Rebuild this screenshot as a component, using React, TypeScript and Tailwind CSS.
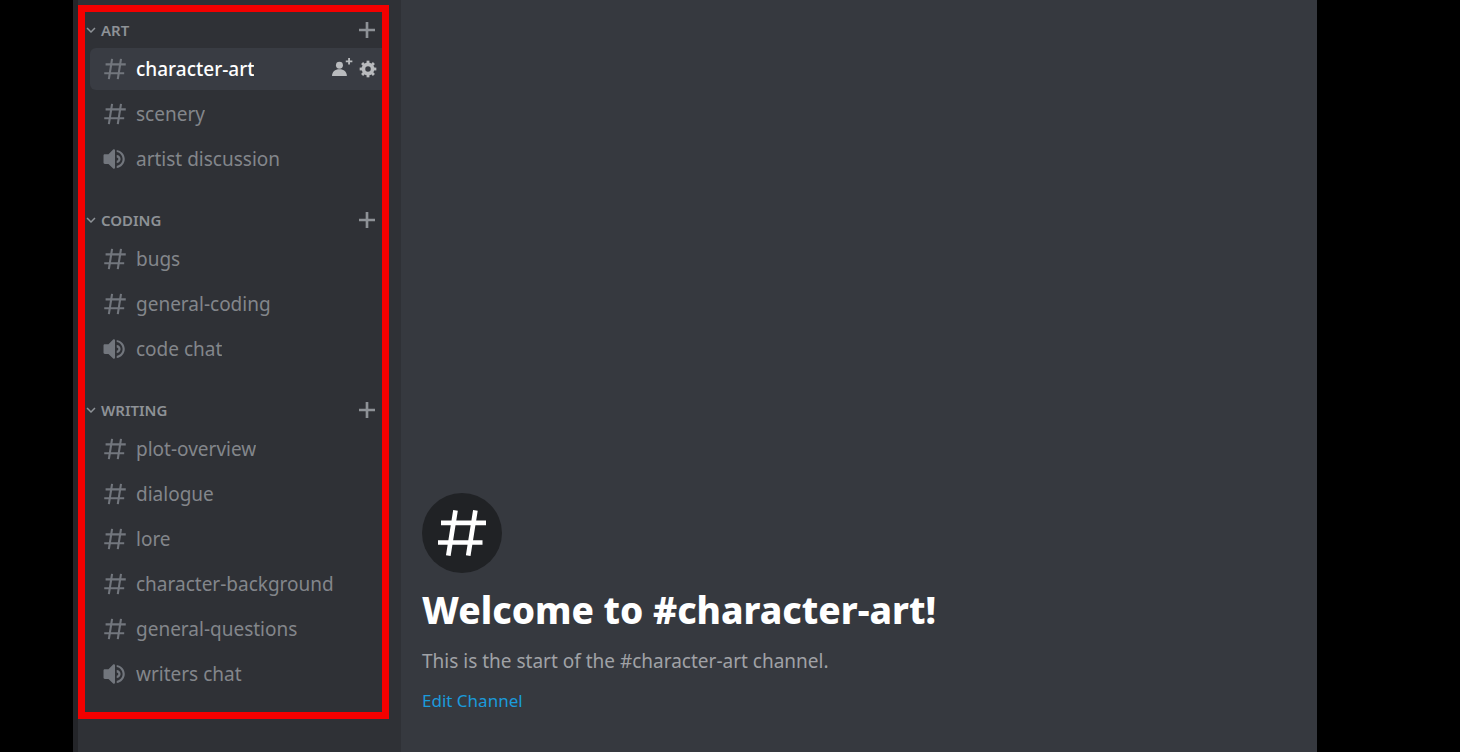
import React, { useState } from 'react';

type ChannelType = 'text' | 'voice';

interface Channel {
  name: string;
  type: ChannelType;
}

interface Category {
  name: string;
  channels: Channel[];
}

const CATEGORIES: Category[] = [
  {
    name: 'Art',
    channels: [
      { name: 'character-art', type: 'text' },
      { name: 'scenery', type: 'text' },
      { name: 'artist discussion', type: 'voice' }
    ]
  },
  {
    name: 'Coding',
    channels: [
      { name: 'bugs', type: 'text' },
      { name: 'general-coding', type: 'text' },
      { name: 'code chat', type: 'voice' }
    ]
  },
  {
    name: 'Writing',
    channels: [
      { name: 'plot-overview', type: 'text' },
      { name: 'dialogue', type: 'text' },
      { name: 'lore', type: 'text' },
      { name: 'character-background', type: 'text' },
      { name: 'general-questions', type: 'text' },
      { name: 'writers chat', type: 'voice' }
    ]
  }
];

const GEAR_TEETH = [0, 45, 90, 135, 180, 225, 270, 315];

function HashIcon({ className }: { className?: string }) {
  return (
    <svg
      viewBox="-5 -6 58 58"
      fill="none"
      stroke="currentColor"
      strokeWidth="4.7"
      className={className}
      aria-hidden="true"
    >
      <path d="M17.5 0.3L10.3 45.7M37.4 0.3L30.2 45.7M3 12.8H48M0 32.5H44.5" />
    </svg>
  );
}

function SpeakerIcon({ className }: { className?: string }) {
  return (
    <svg viewBox="0 0 24 24" fill="currentColor" className={className} aria-hidden="true">
      <path d="M11.383 3.079C11.009 2.925 10.579 3.01 10.293 3.296L6 7.5H2.6C1.9 7.5 1.4 8 1.4 8.6V15.4C1.4 16 1.9 16.5 2.6 16.5H6L10.293 20.71C10.579 20.996 11.009 21.082 11.383 20.927C11.757 20.772 12 20.407 12 20.002V4.002C12 3.599 11.757 3.232 11.383 3.079Z" />
      <path d="M13.6 3.6c4.2.6 7.4 4.1 7.4 8.4s-3.2 7.8-7.4 8.4v-2c3.1-.6 5.4-3.2 5.4-6.4s-2.3-5.8-5.4-6.4z" />
      <path d="M13.6 8.3c2 0 3.6 1.7 3.6 3.7s-1.6 3.7-3.6 3.7v-2.2c.8 0 1.5-.7 1.5-1.5s-.7-1.5-1.5-1.5z" />
    </svg>
  );
}

function InviteIcon({ className }: { className?: string }) {
  return (
    <svg viewBox="0 0 24 24" fill="currentColor" className={className} aria-hidden="true">
      <path d="M19.8 0H21.8V2.6H24.4V4.6H21.8V7.2H19.8V4.6H17.2V2.6H19.8V0Z" />
      <circle cx="10.3" cy="7.8" r="3.8" />
      <path d="M2.2 19.6C2.2 15 5.4 12.2 10.3 12.2C15.2 12.2 18.4 15 18.4 19.6Z" />
    </svg>
  );
}

function GearIcon({ className }: { className?: string }) {
  return (
    <svg
      viewBox="0 0 24 24"
      fill="none"
      stroke="currentColor"
      className={className}
      aria-hidden="true"
    >
      <circle cx="12" cy="12" r="5.5" strokeWidth="4.4" />
      {GEAR_TEETH.map((angle) => (
        <path key={angle} d="M12 5.5V2" strokeWidth="3.4" transform={`rotate(${angle} 12 12)`} />
      ))}
    </svg>
  );
}

function PlusIcon({ className }: { className?: string }) {
  return (
    <svg viewBox="0 0 18 18" fill="currentColor" className={className} aria-hidden="true">
      <polygon points="15 10 10 10 10 15 8 15 8 10 3 10 3 8 8 8 8 3 10 3 10 8 15 8" />
    </svg>
  );
}

function ChevronIcon({ className }: { className?: string }) {
  return (
    <svg viewBox="4 4 16 16" fill="currentColor" className={className} aria-hidden="true">
      <path d="M16.59 8.59L12 13.17L7.41 8.59L6 10L12 16L18 10L16.59 8.59Z" />
    </svg>
  );
}

interface ChannelRowProps {
  channel: Channel;
  selected: boolean;
  onSelect: () => void;
}

function ChannelRow({ channel, selected, onSelect }: ChannelRowProps) {
  const Icon = channel.type === 'voice' ? SpeakerIcon : HashIcon;

  return (
    <li
      className={`ml-[5px] flex h-[42px] items-center rounded-l-md pr-1 ${
        selected ? 'bg-[#393c43]' : 'hover:bg-[#34373c]'
      }`}
    >
      <button
        onClick={onSelect}
        className="flex h-full min-w-0 flex-1 cursor-pointer items-center gap-2 pl-3 text-left"
      >
        <Icon className="size-[26px] shrink-0 text-[#72767d]" />
        <span
          className={`truncate text-[19px] leading-7 ${
            selected ? 'font-medium text-white' : 'text-[#83868b]'
          }`}
        >
          {channel.name}
        </span>
      </button>
      {selected && (
        <div className="flex items-center gap-1.5 text-[#b9bbbe]">
          <button aria-label="Create invite" className="cursor-pointer">
            <InviteIcon className="size-[22px] overflow-visible" />
          </button>
          <button aria-label="Channel settings" className="cursor-pointer">
            <GearIcon className="size-5" />
          </button>
        </div>
      )}
    </li>
  );
}

export default function App() {
  const [selected, setSelected] = useState('character-art');

  return (
    <div className="flex min-h-screen bg-black pl-[73px] pr-[143px] font-['Noto_Sans',sans-serif]">
      <aside className="w-[328px] shrink-0 border-l-[5px] border-[#242529] bg-[#2f3136] pt-[5px]">
        {/* Highlighted channel list */}
        <nav aria-label="Channels" className="w-[311px] border-[7px] border-[#f40000] pb-[17px]">
          <div className="flex flex-col gap-[22px]">
            {CATEGORIES.map((category) => (
              <section key={category.name}>
                <div className="flex h-9 items-center justify-between pr-[3px] text-[#8e9297]">
                  <button className="flex cursor-pointer items-center gap-1 text-[15px] leading-5 font-semibold uppercase">
                    <ChevronIcon className="size-3" />
                    {category.name}
                  </button>
                  <button aria-label={`Create channel in ${category.name}`} className="cursor-pointer">
                    <PlusIcon className="size-6" />
                  </button>
                </div>
                <ul className="flex flex-col gap-[3px]">
                  {category.channels.map((channel) => (
                    <ChannelRow
                      key={channel.name}
                      channel={channel}
                      selected={channel.name === selected}
                      onSelect={() => setSelected(channel.name)}
                    />
                  ))}
                </ul>
              </section>
            ))}
          </div>
        </nav>
      </aside>

      <main className="flex min-w-0 flex-1 flex-col items-start justify-end bg-[#36393f] px-[21px] pb-[37px]">
        <div className="flex size-20 items-center justify-center rounded-full bg-[#202225] text-white">
          <HashIcon className="size-[58px]" />
        </div>
        <h1 className="mt-3 text-[37px] leading-[50px] font-extrabold text-white">
          Welcome to #{selected}!
        </h1>
        <p className="mt-3 text-[19px] leading-7 text-[#a0a2a6]">
          This is the start of the #{selected} channel.
        </p>
        <a href="#edit" className="mt-3 text-[17px] leading-7 text-[#1b9bdb] hover:underline">
          Edit Channel
        </a>
      </main>
    </div>
  );
}
